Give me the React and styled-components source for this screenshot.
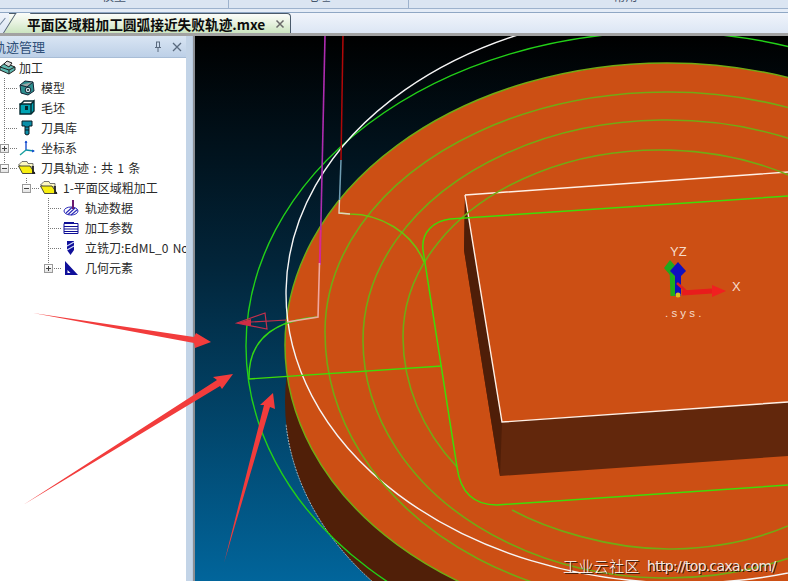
import React from 'react';
import styled, { createGlobalStyle } from 'styled-components';

const Global = createGlobalStyle`
  html, body { margin: 0; padding: 0; background: #dce6f3; overflow: hidden; }
  * { box-sizing: border-box; }
`;

const FONT = `"Noto Sans CJK SC", "Liberation Sans", sans-serif`;

const Page = styled.div`
  position: relative; width: 788px; height: 581px; overflow: hidden;
  display: flex; flex-direction: column; font-family: ${FONT};
`;
const RibbonStrip = styled.div`
  height: 9px; flex: none; display: flex; overflow: hidden;
  background: #dbe5f2; border-bottom: 1px solid #9db2cd;
`;
const RibbonGroup = styled.div`
  width: ${p => p.$w}px; flex: none; text-align: center; overflow: hidden;
  padding-left: ${p => p.$pad || 0}px;
  border-right: ${p => (p.$last ? 'none' : '1px solid #9db2cd')};
  font-size: 12px; line-height: 14px; color: #44546a;
  span { display: block; margin-top: -11px; }
`;
const TabBar = styled.div`
  height: 27px; flex: none; position: relative; display: flex; align-items: flex-end;
  background: linear-gradient(#e4ecf7 0 3px, #8fa7c4 3px 4px, #f0f4fb 4px, #dce6f4 24px, #a2a2a2 24px);
  padding: 0 0 3px 4px;
`;
const PrevTabEdge = styled.div`
  position: absolute; left: -2px; top: 12px; width: 9px; height: 1px;
  background: #6b7f96; transform: rotate(-50deg);
`;
const Tab = styled.div`
  position: relative; width: 282px; height: 20px; padding-left: 18px; padding-right: 5px; margin-left: 5px;
  display: flex; align-items: center; justify-content: space-between;
  background: linear-gradient(#fbfcf9, #e9f3e2 45%, #cbe4c0);
  border-top: 1px solid #4a5a6a; border-right: 1px solid #4a5a6a; border-top-right-radius: 4px;
  &::before {
    content: ''; position: absolute; left: -6px; top: -1px; bottom: 0; width: 14px;
    background: linear-gradient(#fbfcf9, #e9f3e2 45%, #cbe4c0);
    border-left: 1px solid #4a5a6a;
    transform: skewX(-32deg); transform-origin: bottom left;
  }
`;
const TabTitle = styled.span`
  position: relative; font-size: 13.7px; font-weight: 700; color: #0c0c0c; white-space: nowrap;
  font-family: "Noto Sans CJK SC", "DejaVu Sans", sans-serif;
`;
const TabClose = styled.svg`
  width: 10px; height: 10px; flex: none; position: relative;
`;
const Workspace = styled.div`
  flex: 1; min-height: 0; display: flex;
`;
const Panel = styled.div`
  width: 186px; flex: none; display: flex; flex-direction: column; background: #fff; overflow: hidden;
`;
const PanelHead = styled.div`
  height: 22px; flex: none; display: flex; align-items: center;
  background: linear-gradient(#d9e5f3, #bdd0e7); border-bottom: 1px solid #a8bdd6;
  padding-right: 2px;
`;
const PanelTitle = styled.span`
  flex: 1; margin-left: -7px; font-size: 13px; line-height: 18px; color: #2f4f78; white-space: nowrap;
`;
const HeadIcon = styled.svg`
  width: 12px; height: 12px; flex: none; margin-left: 7px; margin-right: ${p => p.$mr || 0}px;
`;
const Tree = styled.div`
  flex: 1; overflow: hidden;
`;
const Row = styled.div`
  height: 20px; display: flex; align-items: stretch; white-space: nowrap;
  margin-left: ${p => (p.$root ? 0 : 4)}px;
`;
const Stem = styled.div`
  width: 22px; flex: none;
`;
const Elbow = styled.div`
  position: relative; width: 15px; flex: none;
  &::before {
    content: ''; position: absolute; left: 0; top: 0; width: 1px;
    height: ${p => (p.$last ? '10px' : '20px')};
    background: repeating-linear-gradient(#777 0 1px, transparent 1px 2px);
  }
  &::after {
    content: ''; position: absolute; left: 0; right: 1px; top: 10px; height: 1px;
    background: repeating-linear-gradient(90deg, #777 0 1px, transparent 1px 2px);
  }
`;
const Expander = styled.span`
  position: absolute; z-index: 1; left: -4px; top: 6px; width: 9px; height: 9px;
  background: linear-gradient(#fff, #e4e4e4); border: 1px solid #9a9a9a;
  &::before { content: ''; position: absolute; left: 1px; right: 1px; top: 3px; height: 1px; background: #444; }
  &::after {
    content: ''; position: absolute; top: 1px; bottom: 1px; left: 3px; width: 1px;
    background: ${p => (p.$open ? 'transparent' : '#444')};
  }
`;
const IconBox = styled.svg`
  width: 16px; height: 16px; flex: none; align-self: center; overflow: visible;
`;
const Label = styled.span`
  margin-left: ${p => (p.$root ? 3 : 6)}px; font-size: 12px; line-height: 20px; color: #2a2a2a;
  word-spacing: 1.6px;
`;
const Splitter = styled.div`
  width: 9px; flex: none; background: linear-gradient(90deg, #c3d4e7 0 6px, #b8cbe0 6px 7px, #8c8f94 7px);
`;
const Viewport = styled.div`
  flex: 1; min-width: 0; background: linear-gradient(#000 0%, #02253a 42%, #01659b 100%);
`;
const Scene = styled.svg`
  display: block; width: 593px; height: 545px;
`;
const SceneText = styled.text`
  font-family: "Liberation Sans", sans-serif; fill: ${p => p.$c || '#f6dccb'};
  font-size: ${p => p.$s || 13}px; letter-spacing: ${p => p.$ls || 0}px;
`;
const ArrowLayer = styled.svg`
  position: absolute; left: 0; top: 0; width: 788px; height: 581px; pointer-events: none;
`;
const Watermark = styled.div`
  position: absolute; left: 563px; top: 556px; display: flex; align-items: center; gap: 7px;
  color: #fff; white-space: nowrap; text-shadow: 1px 1px 0 #2b1204;
`;
const MarkCn = styled.span`
  font-size: 15px; line-height: 20px; letter-spacing: 0.4px; font-family: "Noto Sans CJK SC", sans-serif; font-weight: 300;
`;
const MarkUrl = styled.span`
  font-size: 14px; line-height: 20px; font-family: "DejaVu Sans", sans-serif; color: #f4e8e0; letter-spacing: -0.7px;
`;

/* Curve from its lower part at x=fromX round the left extreme to its upper part at x=toX */
const halfArc = (cx, cy, a, bTop, bBot, fromX, toX) => {
  const h = (x, b) => b * Math.sqrt(Math.max(0, 1 - ((x - cx) / a) ** 2));
  const y0 = (cy + h(fromX, bBot)).toFixed(1);
  const y1 = (cy - h(toX, bTop)).toFixed(1);
  return `M${fromX} ${y0} A${a} ${bBot} 0 0 1 ${cx - a} ${cy} A${a} ${bTop} 0 0 1 ${toX} ${y1}`;
};

const Block = () => (
  <IconBox viewBox="0 0 16 16">
    <path d="M0 7 L5 3 L15 7 L15 10 L9 14 L0 10 Z" fill="#5fb8b0" stroke="#222" />
    <path d="M0 7 L9 10 L9 14 M9 10 L15 7" fill="none" stroke="#222" />
    <path d="M4 4 L7 1 L12 3 L9 7 Z" fill="#d8d8d8" stroke="#222" />
  </IconBox>
);
const ModelIcon = () => (
  <IconBox viewBox="0 0 16 16">
    <path d="M1 5 L6 1 L14 2 L15 11 L9 15 L2 13 Z" fill="#2e8f8f" stroke="#123" />
    <path d="M1 5 L8 7 L14 2" fill="#9aa8a8" stroke="#123" />
    <circle cx="9" cy="10" r="2.8" fill="#cfe8e8" stroke="#123" />
    <circle cx="9" cy="10" r="1" fill="#123" />
  </IconBox>
);
const StockIcon = () => (
  <IconBox viewBox="0 0 16 16">
    <path d="M1 4 L12 4 L15 1 L15 11 L12 14 L1 14 Z" fill="#00a3b3" stroke="#052a30" strokeWidth="1.4" />
    <path d="M1 5 L5 1 L15 1 M12 4 L12 14" fill="none" stroke="#052a30" strokeWidth="1.4" />
    <rect x="6" y="6" width="3" height="4" fill="#052a30" />
  </IconBox>
);
const ToolIcon = () => (
  <IconBox viewBox="0 0 16 16">
    <path d="M3 1 H13 V6 H10 V14 L8 15 L6 14 V6 H3 Z" fill="#0a8ea8" stroke="#0a1a22" />
    <path d="M6 7 H10 M6 10 H10" stroke="#0a1a22" />
  </IconBox>
);
const AxisIcon = () => (
  <IconBox viewBox="0 0 16 16">
    <path d="M7 10 V1" stroke="#1a4fd0" strokeWidth="1.4" />
    <path d="M7 10 L15 11" stroke="#0a8ea8" strokeWidth="1.4" />
    <path d="M7 10 L1 15" stroke="#1aa0a0" strokeWidth="1.4" />
    <path d="M5.5 3 L7 0.5 L8.5 3 Z M13 9.5 L16 11 L13 12.5 Z" fill="#1a4fd0" />
  </IconBox>
);
const FolderIcon = () => (
  <IconBox viewBox="0 0 16 16">
    <path d="M-0.5 5 L3 1.5 H8 L9 3.5 H14 V7 H3 Z" fill="#fbf7c0" stroke="#555" strokeWidth=".8" />
    <path d="M-0.5 6 H11 L16 13.5 H3.5 Z" fill="#f7ee10" stroke="#333" strokeWidth=".9" />
    <path d="M14 6 V13 H16" fill="none" stroke="#222" strokeWidth="1.8" />
  </IconBox>
);
const PathDataIcon = () => (
  <IconBox viewBox="0 0 16 16">
    <ellipse cx="8" cy="11" rx="7" ry="4" fill="#fff" stroke="#2a2ab8" />
    <path d="M3 13 L9 7.5 M5 14.5 L12 8 M8 15 L14.5 9.5" stroke="#2a2ab8" strokeWidth="1.1" />
    <path d="M10 0 V9" stroke="#6a1a70" strokeWidth="2" />
  </IconBox>
);
const ParamIcon = () => (
  <IconBox viewBox="0 0 16 16">
    <path d="M1 3.5 H15 V13.5 H1 Z" fill="#fff" stroke="#0e0e96" />
    <path d="M1 2.5 H11 M1 6.5 H15 M1 9 H15 M1 11.5 H15" stroke="#0e0e96" strokeWidth="1.2" />
  </IconBox>
);
const EndmillIcon = () => (
  <IconBox viewBox="0 0 16 16">
    <path d="M4 1 H11 V10 L7.5 15 L4 10 Z" fill="#10109a" />
    <path d="M4 6 L11 2 M4 10 L11 6" stroke="#cfd8f8" strokeWidth="1.2" />
  </IconBox>
);
const GeoIcon = () => (
  <IconBox viewBox="0 0 16 16">
    <path fillRule="evenodd" d="M2 1 L15 15 H2 Z M4.5 10 V13 H7.5 Z" fill="#10109a" />
  </IconBox>
);

const tree = [
  { depth: 0, icon: Block, label: '加工' },
  { depth: 1, icon: ModelIcon, label: '模型' },
  { depth: 1, icon: StockIcon, label: '毛坯' },
  { depth: 1, icon: ToolIcon, label: '刀具库' },
  { depth: 1, icon: AxisIcon, label: '坐标系', exp: 'closed' },
  { depth: 1, icon: FolderIcon, label: '刀具轨迹 : 共 1 条', exp: 'open', last: true },
  { depth: 2, icon: FolderIcon, label: '1-平面区域粗加工', exp: 'open', last: true },
  { depth: 3, icon: PathDataIcon, label: '轨迹数据' },
  { depth: 3, icon: ParamIcon, label: '加工参数' },
  { depth: 3, icon: EndmillIcon, label: '立铣刀:EdML_0 No' },
  { depth: 3, icon: GeoIcon, label: '几何元素', exp: 'closed', last: true },
];

const TreeRow = ({ item }) => {
  const Icon = item.icon;
  const root = item.depth === 0;
  return (
    <Row $root={root}>
      {Array.from({ length: Math.max(item.depth - 1, 0) }).map((_, i) => <Stem key={i} />)}
      {!root && (
        <Elbow $last={item.last}>
          {item.exp && <Expander $open={item.exp === 'open'} />}
        </Elbow>
      )}
      <Icon />
      <Label $root={root}>{item.label}</Label>
    </Row>
  );
};

const OLIVE = '#72aa14';
const BRIGHT = '#3fdc08';

const App = () => (
  <Page>
    <Global />
    <RibbonStrip>
      <RibbonGroup $w={229}><span>模型</span></RibbonGroup>
      <RibbonGroup $w={180}><span>毛坯</span></RibbonGroup>
      <RibbonGroup $w={379} $pad={54} $last><span>常用</span></RibbonGroup>
    </RibbonStrip>
    <TabBar>
      <PrevTabEdge />
      <Tab>
        <TabTitle>平面区域粗加工圆弧接近失败轨迹.mxe</TabTitle>
        <TabClose viewBox="0 0 10 10">
          <path d="M1.5 1.5 L8.5 8.5 M8.5 1.5 L1.5 8.5" stroke="#6a6a6a" strokeWidth="1.5" />
        </TabClose>
      </Tab>
    </TabBar>
    <Workspace>
      <Panel>
        <PanelHead>
          <PanelTitle>轨迹管理</PanelTitle>
          <HeadIcon viewBox="0 0 12 12">
            <path d="M4 1 H8 M4.5 1 V6.5 H7.5 V1 M3 6.5 H9 M6 6.5 V11" fill="none" stroke="#5a6a7e" strokeWidth="1" />
          </HeadIcon>
          <HeadIcon viewBox="0 0 12 12" $mr={1}>
            <path d="M2 2 L10 10 M10 2 L2 10" stroke="#5a6a7e" strokeWidth="1.3" />
          </HeadIcon>
        </PanelHead>
        <Tree>
          {tree.map((item) => <TreeRow key={item.label} item={item} />)}
        </Tree>
      </Panel>
      <Splitter />
      <Viewport>
        <Scene viewBox="195 36 593 545">
          {/* disc side and top */}
          <ellipse cx="667" cy="402" rx="382" ry="282" fill="#501f08" />
          <path d={halfArc(667, 402, 382, 282, 282, 372, 285).split(' A382 282 0 0 1 285 402')[0] + ' A382 282 0 0 1 286 424'}
            fill="none" stroke="#d8d8d8" strokeWidth="1" strokeDasharray="2 1" opacity=".75" />
          <ellipse cx="667" cy="345" rx="382" ry="282" fill="#cc4f14" stroke={OLIVE} strokeWidth="1.5" />

          {/* boss */}
          <path d="M465 195 L464 250 L483 370 L500 476 L788 456 L788 402 L502 422 Z" fill="#62270c" />
          <path d="M465 195 L464 250 L483 370 L500 476 L502 422 Z" fill="#4f1e08" />
          <path d="M465 195 L788 172 M465 195 L502 422 L788 402" fill="none" stroke="#fff0e6" strokeWidth="1.4" />

          {/* wire curves */}
          <ellipse cx="663" cy="346" rx="417" ry="314" fill="none" stroke="#22d018" strokeWidth="1.4" />
          <ellipse cx="680" cy="297" rx="394" ry="286" transform="rotate(1 680 297)" fill="none" stroke="#f6f6f6" strokeWidth="1.4" />
          <path d={halfArc(667, 332, 342, 240, 272, 800, 800)} fill="none" stroke={OLIVE} strokeWidth="1.6" />
          <path d={halfArc(667, 340, 304, 220, 238, 800, 800)} fill="none" stroke={OLIVE} strokeWidth="1.6" />
          <path d={halfArc(660, 337, 257, 187, 212, 457, 800)} fill="none" stroke={OLIVE} strokeWidth="1.6" />
          <path d="M512 510 C545 528 610 550 673 549 C715 548 755 540 788 526" fill="none" stroke={OLIVE} strokeWidth="1.6" />
          <path d="M339 213 L350 214 C380 214 412 232 424 262" fill="none" stroke="#6ec010" strokeWidth="1.6" />
          <path d="M318 317 C280 320 248 335 249 379" fill="none" stroke="#34d814" strokeWidth="1.5" />
          <path d="M249 379 L442 366" fill="none" stroke={BRIGHT} strokeWidth="1.4" />
          <path d="M788 196 L450 219 C434 221 421 232 423 250 L457 467 C460 490 472 505 497 505 L788 485" fill="none" stroke={BRIGHT} strokeWidth="1.5" />

          {/* leading lines */}
          <path d="M325 36 L320 265" stroke="#ae2cb0" strokeWidth="1.6" />
          <path d="M320.5 230 L319.5 265" stroke="#e0288c" strokeWidth="1.6" />
          <path d="M319.5 263 L318 317 L287 322" fill="none" stroke="#f0a8a0" strokeWidth="1.6" />
          <path d="M343 36 L341 160" stroke="#b00808" strokeWidth="1.5" />
          <path d="M341 160 L339.5 200" stroke="#6f9db2" strokeWidth="1.5" />
          <path d="M339.5 200 L339 213 L350 214" fill="none" stroke="#e8d0c0" strokeWidth="1.4" />

          {/* tool cone */}
          <path d="M237 323 L265 313 L267 329 Z" fill="none" stroke="#c2304c" strokeWidth="1.2" />
          <path d="M237 323 L251 319 L251 326 Z" fill="#d02c44" />
          <path d="M251 322 L287 320" stroke="#c2304c" strokeWidth="1.1" />

          {/* triad */}
          <path d="M673 296 L672 268" stroke="#1fae1f" strokeWidth="5" />
          <path d="M670 260 L677 268 L670 275 L664 268 Z" fill="#1fa81f" />
          <path d="M678 296 L678 272" stroke="#1010c0" strokeWidth="6" />
          <path d="M678 262 L686 271 L678 279 L670 271 Z" fill="#1010c0" />
          <path d="M677 283 L688 293" stroke="#e02020" strokeWidth="2.5" />
          <path d="M682 293 L712 291" stroke="#e81c1c" strokeWidth="5" />
          <path d="M712 285 L726 291 L712 297 Z" fill="#f02020" />
          <circle cx="678" cy="295" r="2.5" fill="#e0c020" />
          <SceneText x="670" y="256">YZ</SceneText>
          <SceneText x="732" y="291">X</SceneText>
          <SceneText x="665" y="317" $s={11.5} $ls={3.2}>.sys.</SceneText>
        </Scene>
      </Viewport>
    </Workspace>

    <ArrowLayer viewBox="0 0 788 581">
      <path d="M33 313 L194 337 L196 333 L211 342 L195 348 L194 343 Z" fill="#f23c3c" />
      <path d="M23 505 L217 380 L213 377 L233 374 L222 389 L220 386 Z" fill="#f23c3c" />
      <path d="M224 563 L264 405 L260 405 L273 393 L275 409 L270 407 Z" fill="#f23c3c" />
    </ArrowLayer>
    <Watermark>
      <MarkCn>工业云社区</MarkCn>
      <MarkUrl>http://top.caxa.com/</MarkUrl>
    </Watermark>
  </Page>
);

export default App;
